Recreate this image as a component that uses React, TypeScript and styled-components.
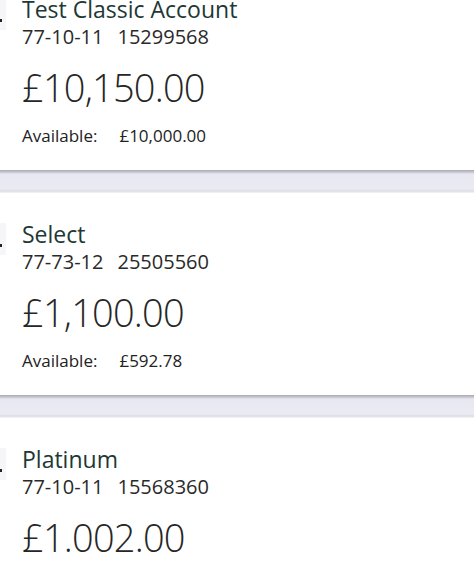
import React from "react";
import styled, { createGlobalStyle } from "styled-components";

const Global = createGlobalStyle`
  html, body { margin: 0; padding: 0; background: #ffffff; }
  body { overflow: hidden; font-family: "Open Sans", "Noto Sans", sans-serif; }
`;

const List = styled.div`
  display: flex;
  flex-direction: column;
  margin-top: -32px;
  width: 474px;
`;

const Card = styled.section`
  position: relative;
  box-sizing: border-box;
  min-height: 202px;
  padding: 27px 0 24px 22px;
  background: #ffffff;
  &::before {
    content: "";
    position: absolute;
    left: 0;
    top: 30px;
    width: 6px;
    height: 32px;
    background: #f6f6f8;
  }
  &::after {
    content: "";
    position: absolute;
    left: 0;
    top: 51px;
    width: 2px;
    height: 3px;
    background: #222;
  }
`;

const Gap = styled.div`
  height: 23px;
  background: linear-gradient(
    to bottom,
    #a9a9b1 0px,
    #c4c4cc 2px,
    #e7e7f1 4px,
    #ebebf4 19px,
    #dcdce4 21px,
    #f6f6f9 23px
  );
`;

const Name = styled.div`
  font-size: 23px;
  line-height: 28px;
  color: #1d3835;
`;

const Codes = styled.div`
  margin-top: 2px;
  display: flex;
  gap: 14px;
  font-size: 20px;
  line-height: 24px;
  color: #2a2a2a;
`;

const Balance = styled.div`
  margin-top: 15px;
  font-size: 38px;
  line-height: 46px;
  font-weight: 300;
  letter-spacing: -0.8px;
  color: #262626;
`;

const Available = styled.div`
  margin-top: 16px;
  display: flex;
  gap: 22px;
  font-size: 17px;
  line-height: 20px;
  color: #222;
`;

type Account = {
  name: string;
  sort: string;
  number: string;
  balance: string;
  available?: string;
};

const accounts: Account[] = [
  { name: "Test Classic Account", sort: "77-10-11", number: "15299568", balance: "£10,150.00", available: "£10,000.00" },
  { name: "Select", sort: "77-73-12", number: "25505560", balance: "£1,100.00", available: "£592.78" },
  { name: "Platinum", sort: "77-10-11", number: "15568360", balance: "£1.002.00" },
];

export default function App() {
  return (
    <>
      <Global />
      <List>
        {accounts.map((a, i) => (
          <React.Fragment key={a.number}>
            {i > 0 && <Gap />}
            <Card>
              <Name>{a.name}</Name>
              <Codes>
                <span>{a.sort}</span>
                <span>{a.number}</span>
              </Codes>
              <Balance>{a.balance}</Balance>
              {a.available && (
                <Available>
                  <span>Available:</span>
                  <span>{a.available}</span>
                </Available>
              )}
            </Card>
          </React.Fragment>
        ))}
      </List>
    </>
  );
}
